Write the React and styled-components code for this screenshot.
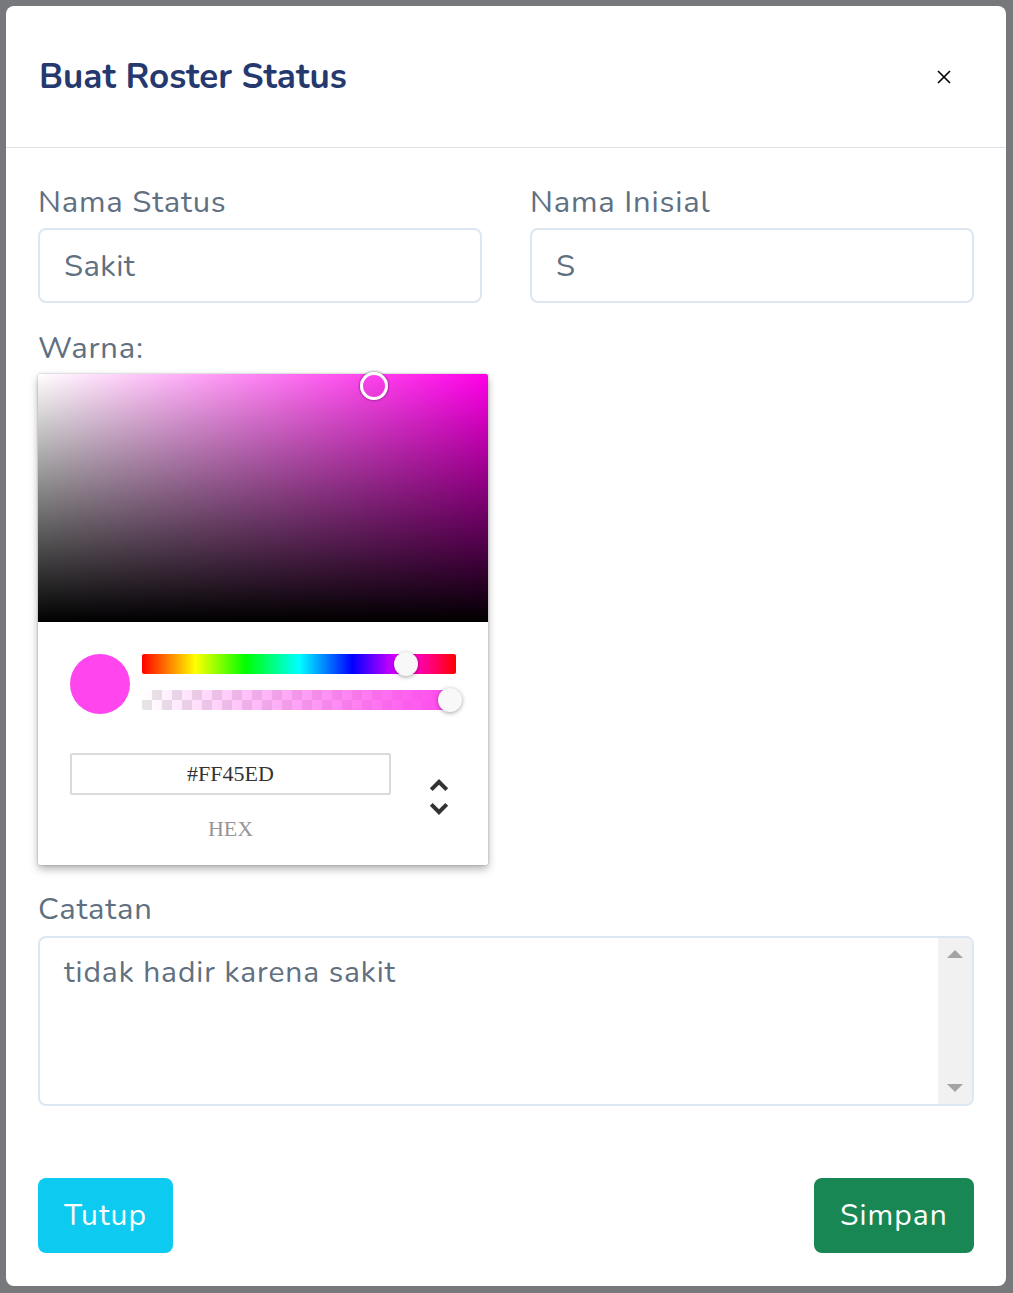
import styled, { createGlobalStyle } from "styled-components";

const GlobalStyle = createGlobalStyle`
  body {
    margin: 0;
    background: #77787b;
    font-family: "Nunito", "Open Sans", sans-serif;
  }
  * { box-sizing: border-box; }
`;

const Backdrop = styled.div`
  min-height: 1293px;
  padding: 6px 7px 7px 6px;
`;

const Dialog = styled.div`
  width: 1000px;
  height: 1280px;
  background: #fff;
  border-radius: 8px;
  display: flex;
  flex-direction: column;
`;

const Header = styled.div`
  height: 142px;
  border-bottom: 1px solid #dee2e6;
  display: flex;
  align-items: center;
  justify-content: space-between;
  padding: 0 54px 0 33px;
`;

const Title = styled.h5`
  margin: 0;
  font-size: 35px;
  font-weight: 700;
  color: #25396f;
`;

const CloseButton = styled.button`
  border: none;
  background: none;
  padding: 0;
  width: 16px;
  height: 16px;
  display: flex;
  cursor: pointer;
`;

const Body = styled.div`
  flex: 1;
  padding: 32px 32px 0;
`;

const Row = styled.div`
  display: grid;
  grid-template-columns: 444px 444px;
  column-gap: 48px;
`;

const Field = styled.div`
  margin-bottom: ${({ $mb }) => $mb ?? 23}px;
`;

const Label = styled.label`
  display: block;
  font-size: 31px;
  letter-spacing: 0.8px;
  line-height: 45px;
  color: #607080;
  margin-bottom: ${({ $mb }) => $mb ?? 4}px;
`;

const Input = styled.input`
  display: block;
  width: 100%;
  height: 75px;
  border: 2px solid #dce7f1;
  border-radius: 8px;
  padding: 0 24px;
  font-family: inherit;
  font-size: 31px;
  letter-spacing: 0.4px;
  color: #607080;
  outline: none;
`;

/* colour picker */
const Picker = styled.div`
  width: 450px;
  background: #fff;
  border-radius: 2px;
  box-shadow: rgba(0, 0, 0, 0.3) 0 0 2px, rgba(0, 0, 0, 0.3) 0 4px 8px;
  font-family: "Liberation Serif", serif;
`;

const Saturation = styled.div`
  position: relative;
  height: 248px;
  border-radius: 2px 2px 0 0;
  background:
    linear-gradient(to top, #000, rgba(0, 0, 0, 0)),
    linear-gradient(to right, #fff, rgba(255, 255, 255, 0)),
    ${({ $hue }) => $hue};
`;

const SatPointer = styled.div`
  position: absolute;
  width: 28px;
  height: 28px;
  margin: -14px 0 0 -14px;
  border-radius: 50%;
  box-shadow: inset 0 0 0 3px #fff, 0 0 2px 1px rgba(0, 0, 0, 0.3);
`;

const PickerBody = styled.div`
  padding: 32px 32px 24px;
`;

const Controls = styled.div`
  display: flex;
  align-items: flex-start;
`;

const Swatch = styled.div`
  width: 60px;
  height: 60px;
  border-radius: 50%;
  background: ${({ $color }) => $color};
  flex-shrink: 0;
  margin-right: 12px;
`;

const Sliders = styled.div`
  flex: 1;
  display: flex;
  flex-direction: column;
  gap: 16px;
`;

const Track = styled.div`
  position: relative;
  height: 20px;
  border-radius: 2px;
`;

const HueTrack = styled(Track)`
  background: linear-gradient(
    to right,
    #f00 0%, #ff0 17%, #0f0 33%, #0ff 50%, #00f 67%, #f0f 83%, #f00 100%
  );
`;

const AlphaTrack = styled(Track)`
  background:
    linear-gradient(to right, rgba(255, 69, 237, 0), rgb(255, 69, 237)),
    repeating-conic-gradient(#e6e6e6 0% 25%, #fff 0% 50%) 0 0 / 20px 20px;
`;

const Thumb = styled.div`
  position: absolute;
  top: 50%;
  width: 24px;
  height: 24px;
  margin: -12px 0 0 -12px;
  border-radius: 50%;
  background: #f8f8f8;
  box-shadow: 0 1px 4px rgba(0, 0, 0, 0.37);
`;

const Fields = styled.div`
  display: flex;
  padding-top: 39px;
`;

const HexCol = styled.div`
  width: 321px;
  text-align: center;
`;

const HexInput = styled.input`
  display: block;
  width: 100%;
  height: 42px;
  border: none;
  border-radius: 2px;
  box-shadow: inset 0 0 0 2px #dadada;
  text-align: center;
  font-family: "Liberation Serif", serif;
  font-size: 22px;
  color: #333;
  outline: none;
`;

const HexLabel = styled.div`
  font-size: 22px;
  line-height: 24px;
  margin-top: 22px;
  color: #969696;
  text-transform: uppercase;
`;

const Toggle = styled.div`
  flex: 1;
  display: flex;
  justify-content: flex-end;
  padding-top: 20px;
  margin-right: -7px;
`;

/* notes */
const NotesWrap = styled.div`
  position: relative;
`;

const Textarea = styled.textarea`
  display: block;
  width: 100%;
  height: 170px;
  border: 2px solid #dce7f1;
  border-radius: 8px;
  padding: 12px 60px 10px 24px;
  font-family: inherit;
  font-size: 30px;
  letter-spacing: 0.9px;
  line-height: 45px;
  color: #607080;
  resize: none;
  overflow: hidden;
  outline: none;
`;

const Scrollbar = styled.div`
  position: absolute;
  top: 2px;
  right: 2px;
  bottom: 2px;
  width: 34px;
  background: #f1f1f1;
  border-radius: 0 6px 6px 0;
  display: flex;
  flex-direction: column;
  justify-content: space-between;
  align-items: center;
  padding: 12px 0 12px;
`;

const Arrow = styled.div`
  width: 0;
  height: 0;
  border-left: 8px solid transparent;
  border-right: 8px solid transparent;
  ${({ $down }) =>
    $down ? "border-top: 8px solid #a3a3a3;" : "border-bottom: 8px solid #a3a3a3;"}
`;

const Footer = styled.div`
  display: flex;
  justify-content: space-between;
  padding: 0 32px 33px;
`;

const Button = styled.button`
  height: 75px;
  padding: 0 26px;
  border: none;
  border-radius: 8px;
  font-family: inherit;
  font-size: 30px;
  letter-spacing: 1.1px;
  color: #fff;
  background: ${({ $variant }) => ($variant === "success" ? "#198754" : "#0dcaf0")};
  cursor: pointer;
`;

const hex = "#FF45ED";

export default function App() {
  return (
    <>
      <GlobalStyle />
      <Backdrop>
        <Dialog>
          <Header>
            <Title>Buat Roster Status</Title>
            <CloseButton aria-label="Close">
              <svg width="16" height="16" viewBox="0 0 16 16">
                <path d="M2 2L14 14M14 2L2 14" stroke="#000" strokeWidth="1.6" />
              </svg>
            </CloseButton>
          </Header>
          <Body>
            <Row>
              <Field>
                <Label $mb={3}>Nama Status</Label>
                <Input defaultValue="Sakit" />
              </Field>
              <Field>
                <Label $mb={3}>Nama Inisial</Label>
                <Input defaultValue="S" />
              </Field>
            </Row>
            <Field $mb={22}>
              <Label $mb={3}>Warna:</Label>
              <Picker>
                <Saturation $hue="#ff00e8">
                  <SatPointer style={{ left: 336, top: 12 }} />
                </Saturation>
                <PickerBody>
                  <Controls>
                    <Swatch $color={hex} />
                    <Sliders>
                      <HueTrack>
                        <Thumb style={{ left: "84%" }} />
                      </HueTrack>
                      <AlphaTrack>
                        <Thumb style={{ left: 308 }} />
                      </AlphaTrack>
                    </Sliders>
                  </Controls>
                  <Fields>
                    <HexCol>
                      <HexInput defaultValue={hex} />
                      <HexLabel>hex</HexLabel>
                    </HexCol>
                    <Toggle>
                      <svg width="48" height="48" viewBox="0 0 24 24">
                        <path fill="#333" d="M12,5.83L15.17,9L16.58,7.59L12,3L7.41,7.59L8.83,9L12,5.83Z" />
                        <path fill="#333" d="M12,18.17L8.83,15L7.42,16.41L12,21L16.59,16.41L15.17,15L12,18.17Z" />
                      </svg>
                    </Toggle>
                  </Fields>
                </PickerBody>
              </Picker>
            </Field>
            <Field $mb={0}>
              <Label>Catatan</Label>
              <NotesWrap>
                <Textarea defaultValue="tidak hadir karena sakit" />
                <Scrollbar>
                  <Arrow />
                  <Arrow $down />
                </Scrollbar>
              </NotesWrap>
            </Field>
          </Body>
          <Footer>
            <Button $variant="info">Tutup</Button>
            <Button $variant="success">Simpan</Button>
          </Footer>
        </Dialog>
      </Backdrop>
    </>
  );
}
